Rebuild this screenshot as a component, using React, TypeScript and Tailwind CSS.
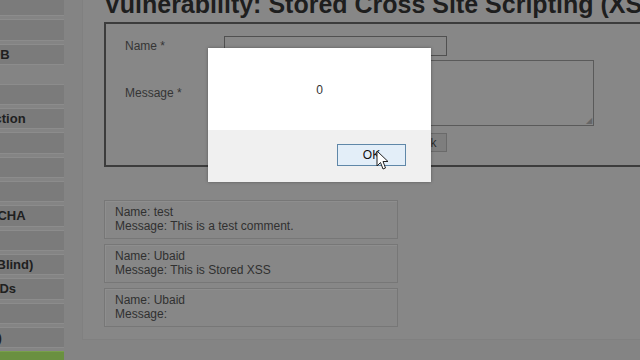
const groupA = ['Home', 'Instructions', 'Setup / Reset DB'];
const groupB = [
  'Brute Force',
  'Command Injection',
  'CSRF',
  'File Inclusion',
  'File Upload',
  'Insecure CAPTCHA',
  'SQL Injection',
  'SQL Injection (Blind)',
  'Weak Session IDs',
  'XSS (DOM)',
  'XSS (Reflected)',
  'XSS (Stored)',
];

const comments = [
  { name: 'test', message: 'This is a test comment.' },
  { name: 'Ubaid', message: 'This is Stored XSS' },
  { name: 'Ubaid', message: '' },
];

function MenuItem({ label, active = false }: { label: string; active?: boolean }) {
  return (
    <div
      className={`h-[21.3px] shrink-0 flex items-center pl-[5px] whitespace-nowrap text-[13px] font-bold border-y ${
        active
          ? 'bg-[#6a9040] border-[#78a04a] text-[#1f1f1f]'
          : 'bg-[#7b7b7b] border-[#8c8c8c] text-[#202020]'
      }`}
    >
      {label}
    </div>
  );
}

function Cursor() {
  return (
    <svg width="14" height="22" viewBox="0 0 14 22" className="absolute left-[376px] top-[150px]">
      <path
        d="M1 1 L1 16 L4.5 12.5 L7 19 L9.5 18 L7 11.5 L12 11.5 Z"
        fill="#ffffff"
        stroke="#222"
        strokeWidth="1"
        strokeLinejoin="round"
      />
    </svg>
  );
}

export default function App() {
  return (
    <div
      className="relative w-[640px] h-[360px] overflow-hidden bg-[#848484] flex"
      style={{ fontFamily: '"Liberation Sans", Arial, sans-serif' }}
    >
      {/* menu, scrolled partly off the left edge */}
      <div className="-ml-[100px] w-[164px] shrink-0 flex flex-col -mt-[5px]">
        <div className="flex flex-col gap-[3px]">
          {groupA.map((l) => (
            <MenuItem key={l} label={l} />
          ))}
        </div>
        <div className="flex flex-col gap-[3px] mt-[19px]">
          {groupB.map((l) => (
            <MenuItem key={l} label={l} active={l === 'XSS (Stored)'} />
          ))}
        </div>
      </div>

      {/* page body */}
      <div className="flex-1 pl-[18px]">
        <div className="h-[340px] bg-[#878787] border-l border-b border-[#808080] pl-[21px] overflow-hidden">
          <h1 className="text-[25px] font-bold leading-none text-[#1e1e1e] whitespace-nowrap -mt-[8px]">
            Vulnerability: Stored Cross Site Scripting (XSS)
          </h1>

          <div className="mt-[5px] w-[600px] h-[145px] border-2 border-[#3c3c3c] pl-[19px] pt-[11px] text-[12px] text-[#353535]">
            <div className="flex items-center h-[21px]">
              <span className="w-[99px]">Name *</span>
              <div className="w-[223px] h-[20px] border border-[#505050] bg-[#888]" />
            </div>
            <div className="flex items-center mt-[4px]">
              <span className="w-[99px]">Message *</span>
              <div className="relative w-[370px] h-[66px] border border-[#5a5a5a] bg-[#888]">
                <span className="absolute right-[1px] bottom-0 text-[8px] leading-none text-[#666]">◢</span>
              </div>
            </div>
            <div className="flex gap-[4px] ml-[99px] mt-[7px]">
              <div className="h-[19px] px-[10px] flex items-center border border-[#6a6a6a] bg-[#7e7e7e] text-[12px] text-[#2e2e2e]">
                Sign Guestbook
              </div>
              <div className="h-[19px] px-[10px] flex items-center border border-[#6a6a6a] bg-[#7e7e7e] text-[12px] text-[#2e2e2e]">
                Clear Guestbook
              </div>
            </div>
          </div>

          <div className="mt-[33px] flex flex-col gap-[5px] w-[294px]">
            {comments.map((c, i) => (
              <div
                key={i}
                className="h-[39px] border border-[#777] shadow-[inset_1px_1px_0_#8e8e8e] pl-[10px] pt-[4px] text-[12px] leading-[14px] text-[#303030]"
              >
                <div>Name: {c.name}</div>
                <div>Message: {c.message}</div>
              </div>
            ))}
          </div>
        </div>
      </div>

      {/* alert dialog */}
      <div className="absolute left-[208px] top-[48px] w-[223px] h-[134px] bg-white shadow-[0_0_3px_rgba(0,0,0,0.35)] flex flex-col">
        <div className="flex-1 flex justify-center pt-[33px] text-[12px] text-[#333]">0</div>
        <div className="h-[52px] bg-[#f0f0f0] flex justify-end items-start pt-[14px] pr-[25px]">
          <div className="w-[69px] h-[22px] bg-[#e3eef8] border border-[#5f87a8] flex items-center justify-center text-[12px] text-[#111]">
            OK
          </div>
        </div>
      </div>
      <Cursor />
    </div>
  );
}
